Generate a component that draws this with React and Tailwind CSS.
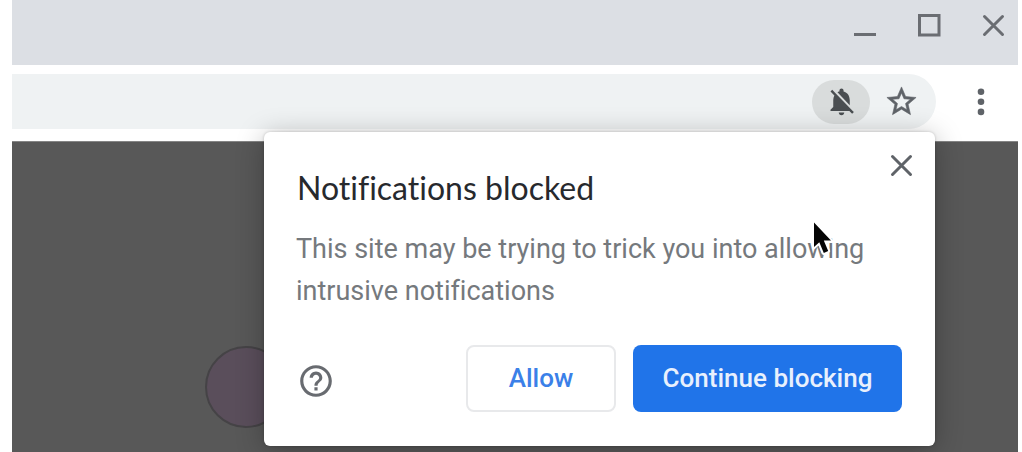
function CloseIcon({ className }) {
  return (
    <svg viewBox="0 0 24 24" className={className} fill="none" stroke="currentColor" strokeWidth="3" strokeLinecap="round" aria-hidden="true">
      <path d="M3.5 3.5L21.5 21.5M21.5 3.5L3.5 21.5" />
    </svg>
  );
}

function WindowControls() {
  return (
    <div className="flex h-[65px] items-start justify-end gap-10 bg-[#dcdfe4] pt-[13px] pr-[13px] text-[#6a6d72]">
      <button type="button" aria-label="Minimize" className="size-6">
        <svg viewBox="0 0 24 24" className="size-6" fill="currentColor" aria-hidden="true">
          <rect x="1" y="20" width="22" height="3" />
        </svg>
      </button>
      <button type="button" aria-label="Maximize" className="size-6">
        <svg viewBox="0 0 24 24" className="size-6" fill="none" stroke="currentColor" strokeWidth="3" aria-hidden="true">
          <rect x="2.5" y="2.5" width="19.5" height="19.5" />
        </svg>
      </button>
      <button type="button" aria-label="Close window" className="size-6">
        <CloseIcon className="size-6" />
      </button>
    </div>
  );
}

function Toolbar() {
  return (
    <div className="flex h-[76px] items-center bg-white pr-5 pb-[3px]">
      <div className="flex h-[55px] flex-1 items-center justify-end gap-[14px] rounded-r-full bg-[#eff2f3] pr-[17px]">
        <button
          type="button"
          aria-label="Notifications blocked"
          className="flex h-11 w-[58px] items-center justify-center rounded-full bg-[#d9dcdc] text-[#4a4e51]"
        >
          <svg viewBox="0 0 24 24" className="size-[33px]" fill="currentColor" aria-hidden="true">
            <path d="M20 18.69L7.84 6.14 5.27 3.49 4 4.76l2.8 2.8v.01c-.52.99-.8 2.16-.8 3.42v5l-2 2v1h13.73l2 2L21 19.72l-1-1.03zM12 22c1.11 0 2-.89 2-2h-4c0 1.11.89 2 2 2zm6-7.32V11c0-3.08-1.64-5.64-4.5-6.32V4c0-.83-.67-1.5-1.5-1.5s-1.5.67-1.5 1.5v.68c-.15.03-.29.08-.42.12-.1.03-.2.07-.3.11h-.01c-.01 0-.01 0-.02.01-.23.09-.46.2-.68.31 0 0-.01 0-.01.01L18 14.68z" />
          </svg>
        </button>
        <button type="button" aria-label="Bookmark this page" className="text-[#5f6368]">
          <svg viewBox="0 0 24 24" className="size-[35px]" fill="currentColor" stroke="currentColor" strokeWidth="0.4" aria-hidden="true">
            <path d="M22 9.24l-7.19-.62L12 2 9.19 8.63 2 9.24l5.46 4.73L5.82 21 12 17.27 18.18 21l-1.63-7.03L22 9.24zM12 15.4l-3.76 2.27 1-4.28-3.32-2.88 4.38-.38L12 6.1l1.71 4.04 4.38.38-3.32 2.88 1 4.28L12 15.4z" />
          </svg>
        </button>
      </div>
      <button type="button" aria-label="Menu" className="ml-7 text-[#5f6368]">
        <svg viewBox="0 0 34 34" className="size-[34px]" fill="currentColor" aria-hidden="true">
          <circle cx="17" cy="6.7" r="3.3" />
          <circle cx="17" cy="16.8" r="3.3" />
          <circle cx="17" cy="26.9" r="3.3" />
        </svg>
      </button>
    </div>
  );
}

function PermissionDialog() {
  return (
    <section
      role="dialog"
      aria-labelledby="dialog-title"
      className="absolute top-[132px] right-[83px] w-[671px] rounded-md bg-white px-[33px] pt-10 pb-[34px] [font-variant-ligatures:none] shadow-[0_4px_28px_rgba(0,0,0,0.28),0_0_3px_rgba(0,0,0,0.2)]"
    >
      <button type="button" aria-label="Close" className="absolute top-[21px] right-[22px] text-[#5f6368]">
        <CloseIcon className="size-6" />
      </button>
      <h1 id="dialog-title" className="font-[Lato,sans-serif] text-[32px] leading-8 text-[#27292d]">
        Notifications blocked
      </h1>
      <p className="mt-6 -mr-1 -ml-px text-[27px] leading-[42px] text-[#75797d]">
        This site may be trying to trick you into allowing intrusive notifications
      </p>
      <div className="mt-[33px] flex items-center gap-[17px] text-[26px] font-medium">
        <button type="button" aria-label="Help" className="mt-1 mr-auto text-[#686b70]">
          <svg viewBox="0 0 24 24" className="size-[38px]" fill="currentColor" aria-hidden="true">
            <path d="M11 18h2v-2h-2v2zm1-16C6.48 2 2 6.48 2 12s4.48 10 10 10 10-4.48 10-10S17.52 2 12 2zm0 18c-4.41 0-8-3.59-8-8s3.59-8 8-8 8 3.59 8 8-3.59 8-8 8zm0-14c-2.21 0-4 1.79-4 4h2c0-1.1.9-2 2-2s2 .9 2 2c0 2-3 1.75-3 5h2c0-2.25 3-2.5 3-5 0-2.21-1.79-4-4-4z" />
          </svg>
        </button>
        <button type="button" className="h-[67px] w-[150px] rounded-lg border-2 border-[#e8e9eb] text-[#3b80e8]">
          Allow
        </button>
        <button type="button" className="h-[67px] w-[269px] rounded-lg bg-[#2074e9] text-[#e8f0fd]">
          Continue blocking
        </button>
      </div>
    </section>
  );
}

function Pointer() {
  return (
    <svg viewBox="0 0 26 42" className="pointer-events-none absolute top-[218px] right-[183px] h-[42px] w-[26px]" aria-hidden="true">
      <path
        d="M5 4.5V29L10.3 24.3L14.8 35L19.2 33L14.8 22.5H22Z"
        fill="#050505"
        stroke="#fff"
        strokeWidth="4"
        strokeLinejoin="round"
        paintOrder="stroke"
      />
    </svg>
  );
}

export default function App() {
  return (
    <div className="flex min-h-screen bg-white pr-1 pl-3 font-[Roboto,sans-serif]">
      <div className="relative flex flex-1 flex-col overflow-hidden">
        <WindowControls />
        <Toolbar />
        <main className="relative flex-1 border-t border-[#858585] bg-[#585858]">
          <div className="absolute top-[204px] left-[193px] size-[82px] rounded-full border-2 border-[#454346] bg-[#5a4e5b]" />
        </main>
        <PermissionDialog />
        <Pointer />
      </div>
    </div>
  );
}
